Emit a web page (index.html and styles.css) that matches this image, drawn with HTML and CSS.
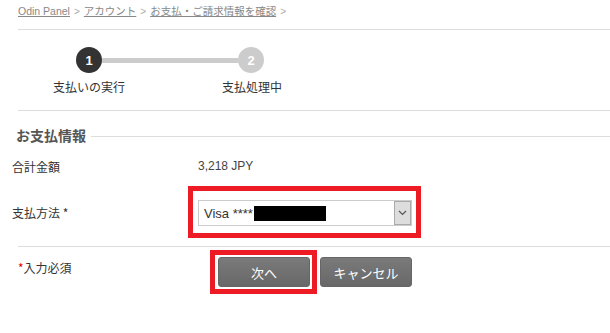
FILE: index.html
```html
<!DOCTYPE html>
<html lang="ja">
<head>
<meta charset="utf-8">
<link rel="stylesheet" href="styles.css">
</head>
<body>
<div class="page">
  <nav class="crumbs">
    <a href="#">Odin Panel</a><span class="sep">&gt;</span><a href="#">アカウント</a><span class="sep">&gt;</span><a href="#">お支払・ご請求情報を確認</a><span class="sep">&gt;</span>
  </nav>
  <div class="steps">
    <div class="track">
      <span class="dot active">1</span>
      <span class="bar"></span>
      <span class="dot">2</span>
    </div>
    <div class="labels">
      <span class="lbl l1">支払いの実行</span>
      <span class="lbl l2">支払処理中</span>
    </div>
  </div>
  <div class="legend"><span class="legend-text">お支払情報</span><span class="legend-line"></span></div>
  <div class="row total">
    <span class="label">合計金額</span>
    <span class="value">3,218 JPY</span>
  </div>
  <div class="row method">
    <span class="label">支払方法 <span class="req">*</span></span>
    <div class="hl hl-select">
      <div class="select">
        <span class="sel-text">Visa ****<span class="redact"></span></span>
        <span class="sel-btn"><svg width="9" height="6" viewBox="0 0 9 6"><path d="M1 1l3.5 3.5L8 1" fill="none" stroke="#555" stroke-width="1.2"/></svg></span>
      </div>
    </div>
  </div>
  <div class="row actions">
    <span class="note"><span class="star">*</span>入力必須</span>
    <div class="btns">
      <div class="hl hl-btn"><button class="btn">次へ</button></div>
      <button class="btn">キャンセル</button>
    </div>
  </div>
</div>
</body>
</html>
```
FILE: styles.css
```css
* { box-sizing: border-box; }
html, body { margin: 0; padding: 0; background: #fff; }
body {
  font-family: "Liberation Sans", Arial, "Noto Sans CJK JP", sans-serif;
  color: #333;
  width: 610px;
  height: 333px;
  overflow: hidden;
}
.crumbs {
  margin-left: 18px;
  height: 30px;
  padding-top: 4px;
  font-size: 10.5px;
  line-height: 14px;
  border-bottom: 1px solid #ddd;
}
.crumbs a { color: #888; text-decoration: underline; }
.crumbs .sep { color: #aaa; margin: 0 4px; font-size: 10px; }
.steps {
  margin-left: 18px;
  height: 81px;
  border-bottom: 1px solid #ddd;
  padding-top: 17px;
}
.track { display: flex; align-items: center; margin-left: 58px; height: 26px; }
.dot {
  width: 26px; height: 26px; border-radius: 50%;
  background: #ccc; color: #fff;
  font-weight: bold; font-size: 13px;
  display: flex; align-items: center; justify-content: center;
}
.dot.active { background: #333; }
.bar { width: 136px; height: 5px; background: #ccc; }
.labels { display: flex; margin-top: 4px; height: 20px; }
.lbl { font-size: 12px; width: 100px; text-align: center; line-height: 20px; color: #333; font-family: "Noto Sans CJK JP", sans-serif; }
.l1 { margin-left: 21px; }
.l2 { margin-left: 63px; }
.legend {
  display: flex; align-items: center;
  margin-top: 14px;
  margin-left: 16px;
  height: 20px;
}
.legend-text { font-weight: bold; font-size: 14px; color: #555; font-family: "Noto Sans CJK JP", sans-serif; }
.legend-line { flex: 1; height: 1px; background: #ddd; margin-left: 5px; margin-top: 2px; }
.row { display: flex; align-items: center; }
.label { width: 176px; margin-left: 12px; font-size: 12px; color: #333; font-family: "Noto Sans CJK JP", sans-serif; }
.req { color: #333; }
.total { height: 24px; margin-top: 9px; }
.value { font-size: 12px; color: #444; padding-left: 10px; }
.method { margin-top: 8px; height: 52px; }
.hl { border: 5px solid #ed1c24; }
.hl-select { width: 233px; height: 52px; padding: 9px 4px 7px 5px; }
.select {
  display: flex; height: 26px;
  border: 1px solid #ccc;
  background: #fff;
}
.sel-text { flex: 1; display: flex; align-items: center; padding-left: 5px; font-size: 13px; color: #333; }
.redact { display: inline-block; width: 72px; height: 15px; background: #000; margin-left: 1px; }
.sel-btn {
  width: 17px; background: #ddd; border: 1px solid #aaa;
  display: flex; align-items: center; justify-content: center;
}
.actions {
  margin-left: 18px;
  margin-top: 8px;
  border-top: 1px solid #ddd;
  padding-top: 3px;
  align-items: flex-start;
}
.note { width: 192px; font-size: 12px; color: #333; margin-top: 9px; font-family: "Noto Sans CJK JP", sans-serif; }
.star { color: #d00; }
.btns { display: flex; align-items: center; }
.hl-btn { padding: 2px 2px 2px 3px; }
.btn {
  width: 92px; height: 30px;
  border: 1px solid #666;
  border-radius: 3px;
  background: linear-gradient(#7a7a7a, #686868);
  color: #fff;
  font-size: 13px;
  font-family: "Noto Sans CJK JP", sans-serif;
  padding: 0;
  margin-left: 0;
}
.btns > .btn { margin-left: 3px; }
```
